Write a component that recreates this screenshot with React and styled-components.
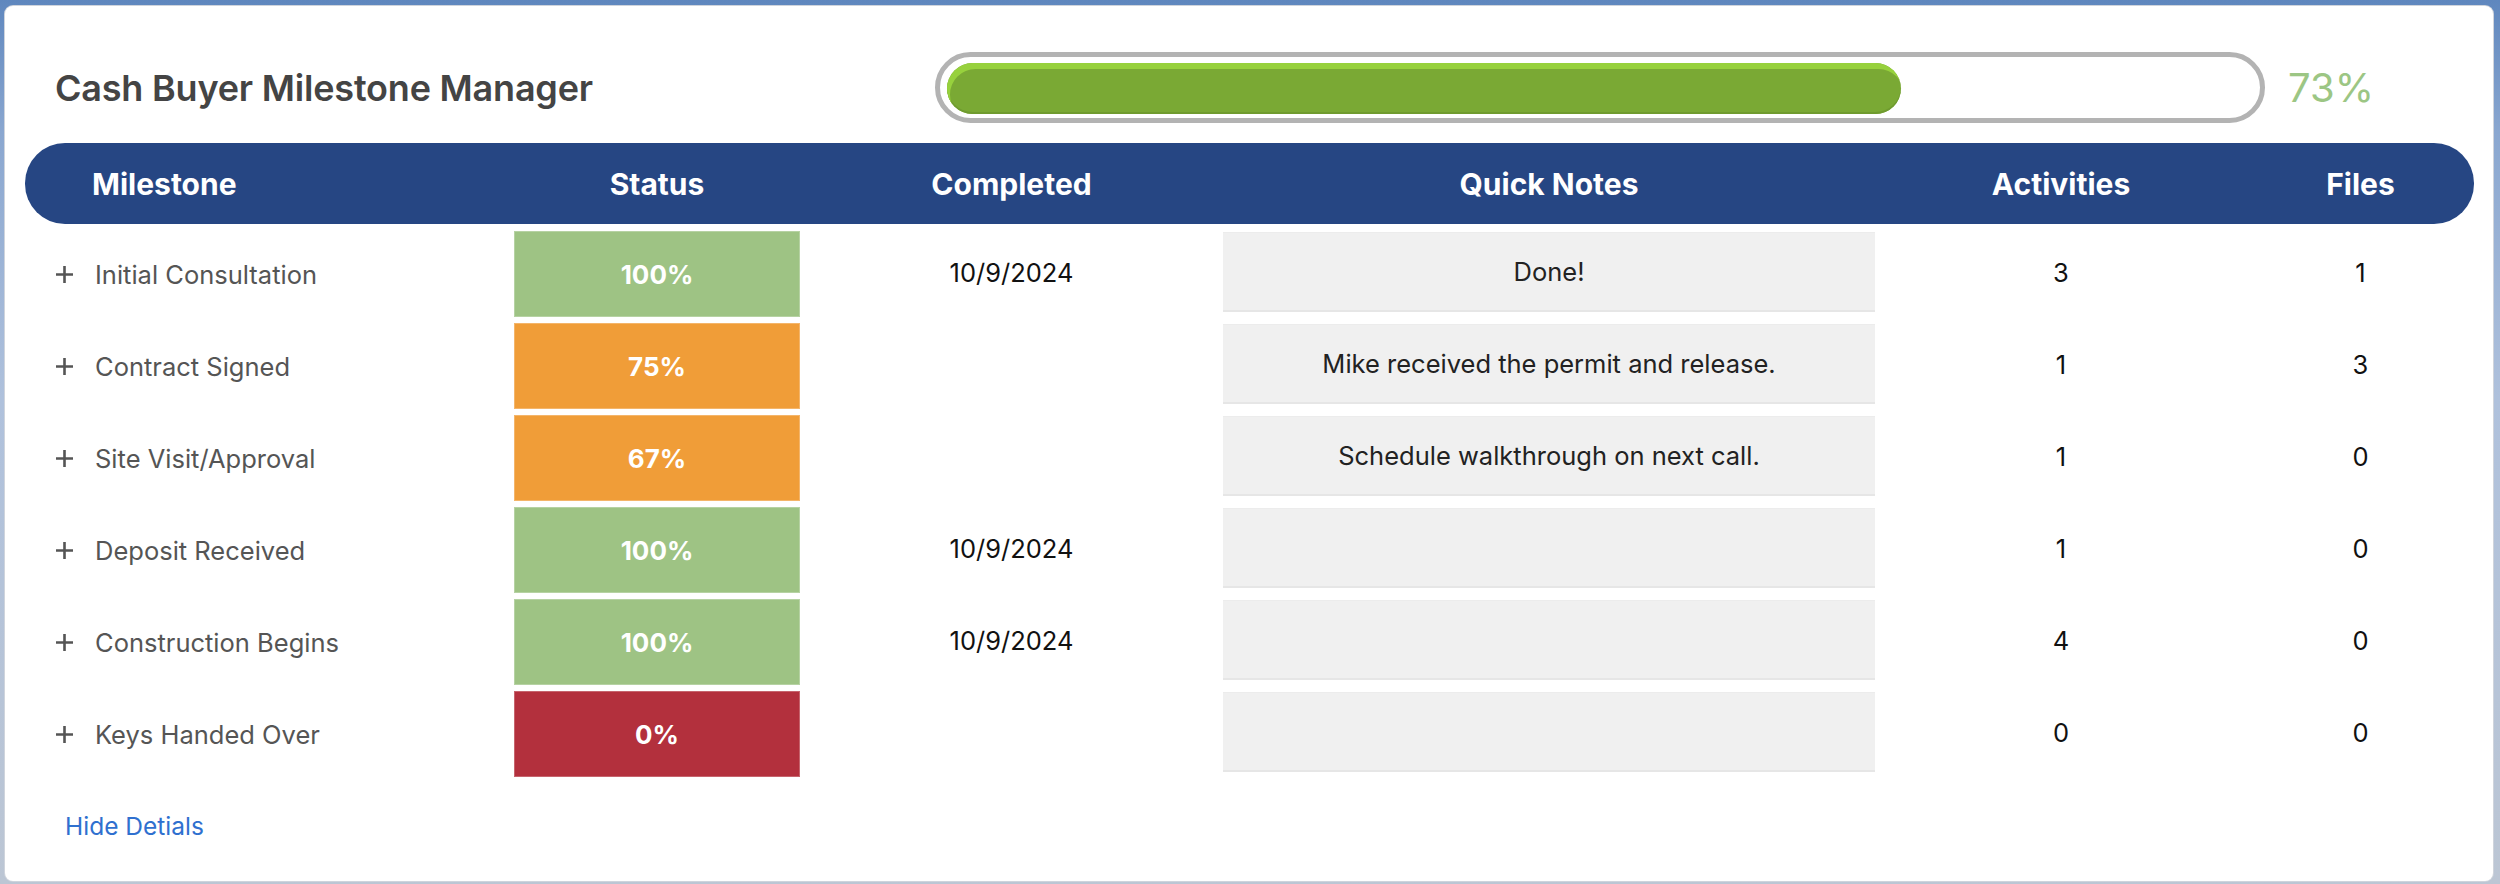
import styled, { createGlobalStyle } from "styled-components";

const GlobalStyle = createGlobalStyle`
  * { box-sizing: border-box; }
  body {
    margin: 0;
    font-family: Inter, "Noto Sans", Arial, sans-serif;
    background: linear-gradient(180deg, #5f87be 0, #8aa7d0 15%, #afc1dc 45%, #bcc6d4 100%);
  }
`;

const COLUMNS = "489px 286px 423px 652px 372px 227px";

const Page = styled.div`
  padding: 6px 7px 3px 5px;
  height: 884px;
`;

const Card = styled.div`
  background: #fff;
  border-radius: 8px;
  box-shadow: 0 0 0 1px #cfd4dc;
  height: 100%;
  padding: 46px 19px 0 20px;
`;

const Top = styled.div`
  display: flex;
  align-items: center;
  padding-left: 30px;
  margin-bottom: 20px;
`;

const Title = styled.h1`
  margin: 0;
  width: 880px;
  flex-shrink: 0;
  font-size: 36px;
  font-weight: 600;
  color: #444;
  letter-spacing: -0.2px;
`;

const Track = styled.div`
  width: 1330px;
  height: 71px;
  border: 5px solid #b3b3b3;
  border-radius: 36px;
  padding: 6px 6px 4px 7px;
  background: #fff;
`;

const Fill = styled.div`
  height: 100%;
  border-radius: 26px;
  background: #7aa934;
  box-shadow: inset 3px 6px 0 #97d13d, inset 0 -2px 0 #6f9b2f;
`;

const Percent = styled.span`
  margin-left: 23px;
  font-size: 40px;
  color: #9cc684;
`;

const Header = styled.div`
  display: grid;
  grid-template-columns: ${COLUMNS};
  align-items: center;
  height: 81px;
  background: #264683;
  border-radius: 40px;
  color: #fff;
  font-size: 30px;
  font-weight: 700;
`;

const HeadCell = styled.div`
  text-align: ${(p) => (p.$left ? "left" : "center")};
  padding-left: ${(p) => (p.$left ? "67px" : "0")};
`;

const Rows = styled.div`
  display: flex;
  flex-direction: column;
  gap: 6px;
  margin-top: 7px;
`;

const Row = styled.div`
  display: grid;
  grid-template-columns: ${COLUMNS};
  align-items: center;
  height: 86px;
  font-size: 25.5px;
`;

const Milestone = styled.div`
  display: flex;
  align-items: center;
  gap: 21px;
  padding-left: 30px;
  color: #555;
  padding-top: 1px;
`;

const StatusBox = styled.div`
  height: 100%;
  display: flex;
  align-items: center;
  justify-content: center;
  background: ${(p) => p.$bg};
  border: 1px solid rgba(255, 255, 255, 0.25);
  color: #fff;
  font-size: 26px;
  font-weight: 700;
`;

const Plain = styled.div`
  text-align: center;
  color: #111;
  margin-top: -4px;
`;

const Note = styled.div`
  align-self: start;
  margin-top: 1px;
  height: 80px;
  display: flex;
  align-items: center;
  justify-content: center;
  background: #f0f0f0;
  border-top: 1px solid #ececec;
  border-bottom: 2px solid #e6e6e6;
  color: #222;
`;

const Toggle = styled.a`
  display: inline-block;
  margin: 34px 0 0 40px;
  font-size: 24.5px;
  line-height: 30px;
  color: #2f70cf;
  cursor: pointer;
`;

const PlusIcon = () => (
  <svg width="19" height="19" viewBox="0 0 19 19">
    <path d="M9.5 1v17M1 9.5h17" stroke="#555" strokeWidth="2.6" />
  </svg>
);

const statusColor = (pct) => (pct === 100 ? "#9ec384" : pct === 0 ? "#b3303d" : "#f09d38");

const milestones = [
  { name: "Initial Consultation", pct: 100, date: "10/9/2024", note: "Done!", activities: 3, files: 1 },
  { name: "Contract Signed", pct: 75, date: "", note: "Mike received the permit and release.", activities: 1, files: 3 },
  { name: "Site Visit/Approval", pct: 67, date: "", note: "Schedule walkthrough on next call.", activities: 1, files: 0 },
  { name: "Deposit Received", pct: 100, date: "10/9/2024", note: "", activities: 1, files: 0 },
  { name: "Construction Begins", pct: 100, date: "10/9/2024", note: "", activities: 4, files: 0 },
  { name: "Keys Handed Over", pct: 0, date: "", note: "", activities: 0, files: 0 },
];

export default function App() {
  const overall = 73;

  return (
    <Page>
      <GlobalStyle />
      <Card>
        <Top>
          <Title>Cash Buyer Milestone Manager</Title>
          <Track>
            <Fill style={{ width: `${overall}%` }} />
          </Track>
          <Percent>{overall}%</Percent>
        </Top>

        <Header>
          <HeadCell $left>Milestone</HeadCell>
          <HeadCell>Status</HeadCell>
          <HeadCell>Completed</HeadCell>
          <HeadCell>Quick Notes</HeadCell>
          <HeadCell>Activities</HeadCell>
          <HeadCell>Files</HeadCell>
        </Header>

        <Rows>
          {milestones.map((m) => (
            <Row key={m.name}>
              <Milestone>
                <PlusIcon />
                {m.name}
              </Milestone>
              <StatusBox $bg={statusColor(m.pct)}>{m.pct}%</StatusBox>
              <Plain>{m.date}</Plain>
              <Note>{m.note}</Note>
              <Plain>{m.activities}</Plain>
              <Plain>{m.files}</Plain>
            </Row>
          ))}
        </Rows>

        <Toggle>Hide Detials</Toggle>
      </Card>
    </Page>
  );
}
